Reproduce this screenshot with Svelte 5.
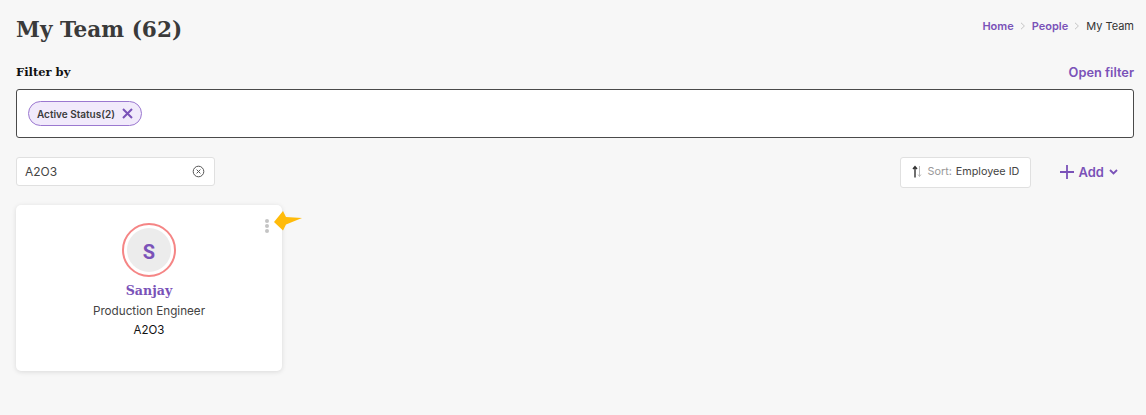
<script lang="ts">
	const crumbs = ['Home', 'People'];
</script>

<div class="page">
	<header class="top">
		<h1>My Team (62)</h1>
		<nav class="crumbs">
			{#each crumbs as crumb}
				<span class="link">{crumb}</span>
				<svg class="sep" width="6" height="8" viewBox="0 0 6 8"><path d="M1 .8 4.4 4 1 7.2" fill="none" stroke="#c4c4c4" stroke-width="1" /></svg>
			{/each}
			<span class="current">My Team</span>
		</nav>
	</header>

	<div class="filter-head">
		<span class="filter-label">Filter by</span>
		<span class="open-filter">Open filter</span>
	</div>
	<div class="filter-box">
		<span class="chip">
			Active Status(2)
			<svg width="11" height="11" viewBox="0 0 11 11"><path d="M1 1l9 9M10 1l-9 9" stroke="#7a52b8" stroke-width="2" fill="none" /></svg>
		</span>
	</div>

	<div class="toolbar">
		<div class="search">
			<span>A2O3</span>
			<svg width="13" height="13" viewBox="0 0 13 13" fill="none" stroke="#555" stroke-width="1"><circle cx="6.5" cy="6.5" r="5.3" /><path d="M4.6 4.6l3.8 3.8M8.4 4.6l-3.8 3.8" /></svg>
		</div>
		<div class="actions">
			<div class="sort">
				<svg class="sort-icon" width="10" height="13" viewBox="0 0 10 13" fill="none"><path d="M3 12.500V1.500M1 4l2-2.500L5 4" stroke="#333" stroke-width="1.4" /><path d="M7.500 1v10.500M6 9.500l1.500 2 1.500-2" stroke="#bbb" stroke-width="1" /></svg>
				<span class="sort-label">Sort:</span>
				<span>Employee ID</span>
			</div>
			<div class="add">
				<svg width="14" height="14" viewBox="0 0 14 14"><path d="M7 0v14M0 7h14" stroke="#7a52b8" stroke-width="1.8" /></svg>
				<span>Add</span>
				<svg width="9" height="6" viewBox="0 0 9 6"><path d="M1 1l3.500 3.500L8 1" fill="none" stroke="#7a52b8" stroke-width="1.8" /></svg>
			</div>
		</div>
	</div>

	<article class="card">
		<div class="menu"><i></i><i></i><i></i></div>
		<svg class="pointer" width="29" height="20" viewBox="0 0 29 20"><path d="M0 11 9 0 12 6 28 7 12 13.500 9 19.500Z" fill="#ffbb0a" /></svg>
		<div class="ring"><div class="avatar">S</div></div>
		<div class="name">Sanjay</div>
		<div class="role">Production Engineer</div>
		<div class="emp-id">A2O3</div>
	</article>
</div>

<style>
	:global(body) {
		background: #f7f7f7;
	}

	.page {
		box-sizing: border-box;
		height: 415px;
		padding: 11px 12px 0 16px;
		font-family: 'Inter', 'Noto Sans', sans-serif;
		color: #333;
	}

	.top {
		display: flex;
		justify-content: space-between;
		align-items: center;
		height: 36px;
	}

	h1 {
		margin: 0;
		font-family: 'DejaVu Serif', serif;
		font-size: 21.600px;
		font-weight: 700;
		color: #3a3a3a;
	}

	.crumbs {
		display: flex;
		align-items: center;
		gap: 6px;
		margin-bottom: 6px;
		font-size: 11px;
	}

	.link {
		color: #7a52b8;
		font-weight: 600;
	}

	.current {
		color: #333;
	}

	.filter-head {
		display: flex;
		justify-content: space-between;
		align-items: center;
		margin-top: 15px;
		height: 20px;
	}

	.filter-label {
		font-family: 'DejaVu Serif', serif;
		font-size: 11.500px;
		font-weight: 700;
		color: #111;
	}

	.open-filter {
		color: #7a52b8;
		font-size: 12.800px;
		font-weight: 600;
	}

	.filter-box {
		box-sizing: border-box;
		height: 49px;
		margin-top: 7px;
		padding: 11px;
		background: #fff;
		border: 1px solid #4a4a4a;
		border-radius: 3px;
	}

	.chip {
		display: inline-flex;
		align-items: center;
		gap: 7px;
		box-sizing: border-box;
		height: 25px;
		padding: 0 8px;
		background: #f1eafb;
		border: 1px solid #9b78d0;
		border-radius: 13px;
		font-size: 10px;
		font-weight: 600;
		color: #3c3c3c;
	}

	.toolbar {
		display: flex;
		justify-content: space-between;
		align-items: flex-start;
		margin-top: 19px;
	}

	.search {
		box-sizing: border-box;
		display: flex;
		justify-content: space-between;
		align-items: center;
		width: 199px;
		height: 29px;
		padding: 0 9px 0 8px;
		background: #fff;
		border: 1px solid #e0e0e0;
		border-radius: 3px;
		font-size: 12px;
		color: #444;
	}

	.actions {
		display: flex;
		align-items: center;
		gap: 29px;
		padding-right: 16px;
	}

	.sort {
		box-sizing: border-box;
		display: flex;
		align-items: center;
		gap: 5px;
		width: 131px;
		height: 31px;
		padding: 0 0 2px 11px;
		background: #fff;
		border: 1px solid #e0e0e0;
		border-radius: 3px;
		font-size: 10.800px;
		color: #444;
		white-space: nowrap;
	}

	.sort-icon {
		flex-shrink: 0;
	}

	.sort-label {
		color: #999;
		margin-right: -1px;
		margin-left: 1px;
	}

	.add {
		display: flex;
		align-items: center;
		gap: 5px;
		padding-bottom: 2px;
		color: #7a52b8;
		font-size: 13px;
		font-weight: 600;
	}

	.card {
		position: relative;
		box-sizing: border-box;
		display: flex;
		flex-direction: column;
		align-items: center;
		width: 266px;
		height: 166px;
		margin-top: 17px;
		padding-top: 18px;
		background: #fff;
		border-radius: 5px;
		box-shadow: 0 1px 5px rgba(0, 0, 0, 0.12);
	}

	.menu {
		position: absolute;
		top: 14px;
		right: 13px;
		display: flex;
		flex-direction: column;
		gap: 1px;
	}

	.menu i {
		width: 4px;
		height: 4px;
		border-radius: 50%;
		background: #c4c4c4;
	}

	.pointer {
		position: absolute;
		top: 6px;
		left: 258px;
	}

	.ring {
		box-sizing: border-box;
		display: flex;
		align-items: center;
		justify-content: center;
		width: 54px;
		height: 54px;
		border: 2px solid #f58585;
		border-radius: 50%;
	}

	.avatar {
		box-sizing: border-box;
		display: flex;
		align-items: center;
		justify-content: center;
		width: 44px;
		height: 44px;
		padding-top: 3px;
		border-radius: 50%;
		background: #ececec;
		color: #7a52b8;
		font-family: 'Roboto', sans-serif;
		font-size: 20px;
		font-weight: 700;
	}

	.name {
		margin-top: 5px;
		font-family: 'DejaVu Serif', serif;
		font-size: 12.600px;
		font-weight: 700;
		color: #7a52b8;
		line-height: 18px;
	}

	.role {
		margin-top: 3px;
		font-size: 11.700px;
		color: #444;
		line-height: 16px;
	}

	.emp-id {
		margin-top: 3px;
		font-size: 11.500px;
		color: #111;
		line-height: 16px;
	}
</style>
